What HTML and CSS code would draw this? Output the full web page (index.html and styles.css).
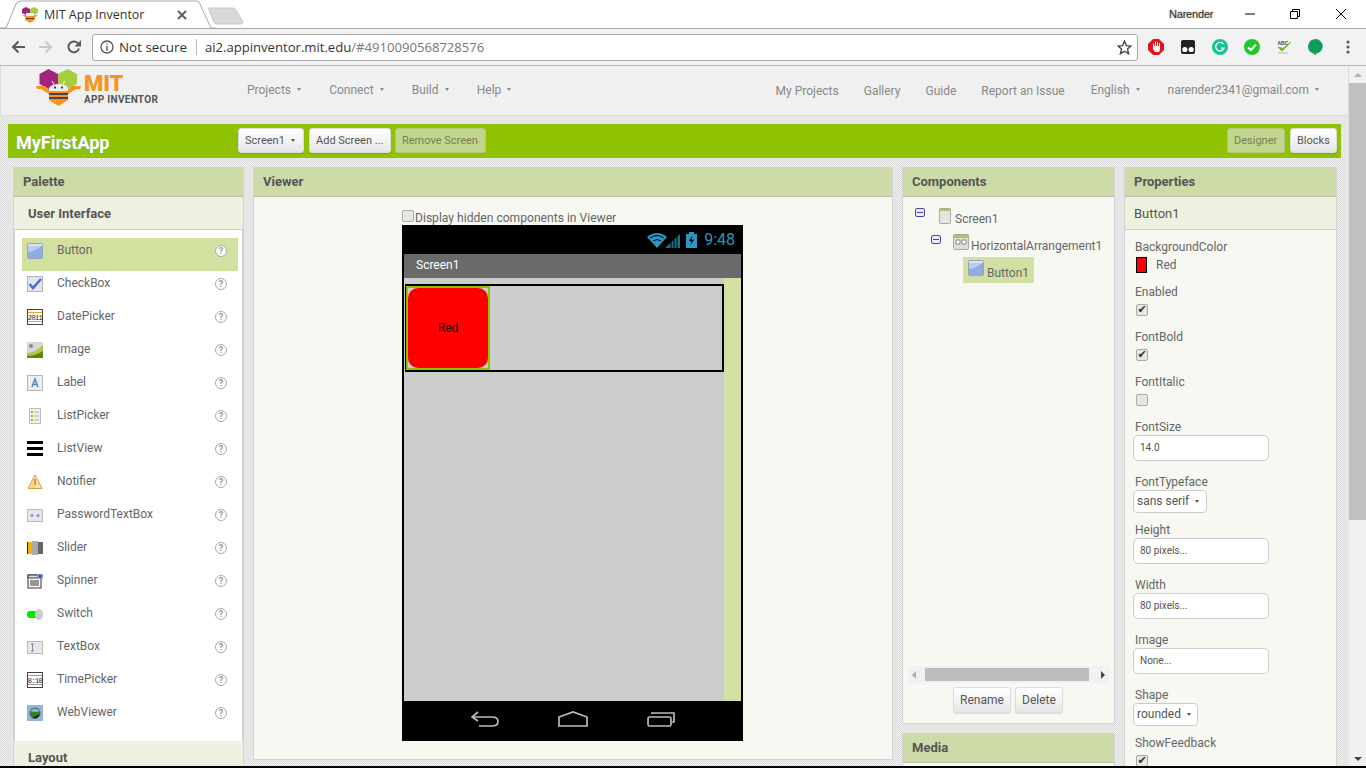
FILE: index.html
```html
<!DOCTYPE html>
<html lang="en">
<head>
<meta charset="utf-8">
<title>MIT App Inventor</title>
<link rel="stylesheet" href="styles.css">
</head>
<body>
<header class="chrome">
  <div class="tabstrip">
    <div class="tab">
      <svg class="tab-shape" width="216" height="29" viewBox="0 0 216 29"><path d="M0 28H6L16 4Q17 1 21 1H196Q199 1 200 4L211 28H216" fill="#fff" stroke="#a8a8a8"/></svg>
      <svg class="favicon" width="16" height="16" viewBox="0 0 16 16"><path d="M0 0H16V16H0Z" fill="#fff"/><path d="M4 0L8 2V6L4 8L0 6V2Z" fill="#a4237d"/><path d="M12 0L16 2V6L12 8L8 6V2Z" fill="#a5cf3f"/><path d="M0 8H16L13 10V13L8 16L3 13V10Z" fill="#f7931e"/><path d="M4 6H12V9H4Z" fill="#eee"/><path d="M4 11H12V12H4Z" fill="#444"/></svg>
      <span class="tab-title">MIT App Inventor</span>
      <svg class="tab-close" width="10" height="10" viewBox="0 0 10 10"><path d="M1 1L9 9M9 1L1 9" stroke="#5a5a5a" stroke-width="1.8"/></svg>
    </div>
    <svg class="newtab" width="36" height="18" viewBox="0 0 36 18"><path d="M1 1H25Q27 1 28 3L35 15Q35 17 33 17H9Q7 17 6 15L1 3Q0 1 1 1Z" fill="#d8d8d8" stroke="#c8c8c8"/></svg>
    <div class="winctl">
      <span class="user">Narender</span>
      <svg class="win-min" width="10" height="10" viewBox="0 0 10 10"><path d="M0 5H10" stroke="#000"/></svg>
      <svg class="win-max" width="10" height="10" viewBox="0 0 10 10"><path d="M.5 2.5H7.5V9.5H.5ZM2.5 2.5V.5H9.5V7.5H7.5" fill="none" stroke="#000"/></svg>
      <svg class="win-close" width="10" height="10" viewBox="0 0 10 10"><path d="M0 0L10 10M10 0L0 10" stroke="#000"/></svg>
    </div>
  </div>
  <div class="toolbar">
    <svg class="nav-ico" width="14" height="14" viewBox="0 0 14 14"><path d="M14 7H2M7.5 1.5L2 7L7.5 12.5" fill="none" stroke="#5a5a5a" stroke-width="2"/></svg>
    <svg class="nav-ico" width="14" height="14" viewBox="0 0 14 14"><path d="M0 7H12M6.5 1.5L12 7L6.5 12.5" fill="none" stroke="#c8c8c8" stroke-width="2"/></svg>
    <svg class="nav-ico" width="14" height="14" viewBox="0 0 14 14"><path d="M12 8.5A5.4 5.4 0 1 1 10.8 3.2" fill="none" stroke="#5a5a5a" stroke-width="2"/><path d="M14 0V6.5H7.5Z" fill="#5a5a5a"/></svg>
    <div class="omnibox">
      <svg class="info" width="14" height="14" viewBox="0 0 14 14"><circle cx="7" cy="7" r="6" fill="none" stroke="#555" stroke-width="1.3"/><path d="M6.3 3.2H7.7V4.6H6.3ZM6.3 6H7.7V10.8H6.3Z" fill="#555"/></svg>
      <span class="notsecure">Not secure</span>
      <span class="omni-sep"></span>
      <span class="url">ai2.appinventor.mit.edu<span class="url-rest">/#4910090568728576</span></span>
      <svg class="star" width="15" height="15" viewBox="0 0 15 15"><path d="M7.5 1.3L9.4 5.6L14 6L10.5 9.1L11.6 13.7L7.5 11.2L3.4 13.7L4.5 9.1L1 6L5.6 5.6Z" fill="none" stroke="#444" stroke-width="1.4"/></svg>
    </div>
    <div class="exts">
      <svg width="16" height="16" viewBox="0 0 16 16"><path d="M5 0H11L16 5V11L11 16H5L0 11V5Z" fill="#e6141a"/><path d="M5 5V10L7 13H11L12 11V4H11V7H10V3H9V7H8V2.7H7V7H6V4Z" fill="#fff"/></svg>
      <svg width="16" height="16" viewBox="0 0 16 16"><rect x="1" y="1" width="14" height="14" rx="2" fill="#222"/><circle cx="4.8" cy="10.5" r="2.6" fill="#fff"/><circle cx="11.2" cy="10.5" r="2.6" fill="#fff"/></svg>
      <svg width="16" height="16" viewBox="0 0 16 16"><circle cx="8" cy="8" r="8" fill="#15c39a"/><path d="M11.5 5.2A4.3 4.3 0 1 0 12 9.2H9" fill="none" stroke="#fff" stroke-width="1.3"/></svg>
      <svg width="16" height="16" viewBox="0 0 16 16"><circle cx="8" cy="8" r="8" fill="#1fc72d"/><path d="M4 8.5L7 11L12 5.5" fill="none" stroke="#fff" stroke-width="2"/></svg>
      <svg width="16" height="16" viewBox="0 0 16 16"><text x="1.500" y="5.500" class="abc">ABC</text><path d="M2 8L6 12L15 3L7 9.500Z" fill="#7cb518" stroke="#7cb518"/><path d="M2 14H12" stroke="#ccc" stroke-width="1.500"/></svg>
      <svg width="16" height="16" viewBox="0 0 16 16"><path d="M8 0A8 7.400 0 0 1 8 14.600V16.500L5 14.200A8 7.400 0 0 1 8 0Z" fill="#0f9d58"/></svg>
    </div>
    <svg class="kebab" width="4" height="14" viewBox="0 0 4 14"><circle cx="2" cy="2" r="1.600" fill="#5a5a5a"/><circle cx="2" cy="7" r="1.600" fill="#5a5a5a"/><circle cx="2" cy="12" r="1.600" fill="#5a5a5a"/></svg>
  </div>
</header>

<div class="page">
  <div class="main">
    <nav class="menubar">
      <div class="logo">
        <svg class="bee" width="46" height="38" viewBox="0 0 46 38">
          <path d="M3.500 5L12.500 0L22 5V15L12.500 20L3.500 15Z" fill="#a4237d"/>
          <path d="M22 5L31.500 0L41 5V15L31.500 20L22 15Z" fill="#a5cf3f"/>
          <path d="M0 17H9L15 22L13 25L5 20H1ZM45 17H36L30 22L32 25L40 20H44Z" fill="#f7931e"/>
          <path d="M13 20H32V31L22.500 37L13 31Z" fill="#f7931e"/>
          <path d="M13 19Q15 15 22.500 15Q30 15 32 19V22H13Z" fill="#eee"/>
          <path d="M18 15L16 12M27 15L29 12" stroke="#fff"/>
          <path d="M18 17.500H20V19.500H18ZM25 17.500H27V19.500H25Z" fill="#444"/>
          <path d="M13 24H32V26H13ZM13 28H32V30H13Z" fill="#444"/>
        </svg>
        <div class="logo-text">
          <span class="logo-mit">MIT</span>
          <span class="logo-app">APP INVENTOR</span>
        </div>
      </div>
      <ul class="menu">
        <li>Projects<i class="caret"></i></li>
        <li>Connect<i class="caret"></i></li>
        <li>Build<i class="caret"></i></li>
        <li>Help<i class="caret"></i></li>
      </ul>
      <ul class="menu menu-right">
        <li class="low">My Projects</li>
        <li class="low">Gallery</li>
        <li class="low">Guide</li>
        <li class="low">Report an Issue</li>
        <li class="menu-lang">English<i class="caret"></i></li>
        <li class="menu-user">narender2341@gmail.com<i class="caret"></i></li>
      </ul>
    </nav>

    <div class="projectbar">
      <span class="project-name">MyFirstApp</span>
      <button class="btn btn-screen">Screen1<i class="caret caret-dark"></i></button>
      <button class="btn btn-add">Add Screen ...</button>
      <button class="btn btn-off btn-remove">Remove Screen</button>
      <button class="btn btn-off btn-designer">Designer</button>
      <button class="btn btn-blocks">Blocks</button>
    </div>

    <div class="panels">
      <section class="panel palette">
        <h2 class="panel-head">Palette</h2>
        <h3 class="sub-head sub-strong">User Interface</h3>
        <div class="pal-list">
          <div class="pal-row selected"><svg class="pal-ico" viewBox="0 0 16 16"><rect x=".5" y=".5" width="15" height="15" rx="1" fill="#b9cdee" stroke="#9aa4b8"/><path d="M1 15V9Q8 9 15 2V15Z" fill="#8fade0"/><path d="M1 1H15V3H1Z" fill="#dbe4f5"/></svg><span class="pal-name">Button</span><span class="help">?</span></div>
          <div class="pal-row"><svg class="pal-ico" viewBox="0 0 16 16"><rect x=".5" y=".5" width="15" height="15" fill="#e4e6ea" stroke="#b5b5b5"/><path d="M2.500 8L6 12L14 3" fill="none" stroke="#4472c4" stroke-width="2.500"/></svg><span class="pal-name">CheckBox</span><span class="help">?</span></div>
          <div class="pal-row"><svg class="pal-ico" viewBox="0 0 16 16"><rect x=".5" y=".5" width="15" height="15" fill="#fff" stroke="#444"/><path d="M1 3.500H15M1 12.500H15" stroke="#f0a030"/><text x="8" y="10.500" class="ico-digits">2011</text></svg><span class="pal-name">DatePicker</span><span class="help">?</span></div>
          <div class="pal-row"><svg class="pal-ico" viewBox="0 0 16 16"><rect width="16" height="16" fill="#d8d8d8"/><path d="M0 11Q8 11 16 3V16H0Z" fill="#a8c850"/><path d="M0 14Q8 14 16 9V16H0Z" fill="#5f8a00"/><circle cx="4" cy="4" r="2" fill="#888"/></svg><span class="pal-name">Image</span><span class="help">?</span></div>
          <div class="pal-row"><svg class="pal-ico" viewBox="0 0 16 16"><rect x=".5" y=".5" width="15" height="15" fill="#eee" stroke="#b5b5b5"/><path d="M5 12L8 4L11 12M6 9.500H10" fill="none" stroke="#5b84c8" stroke-width="1.500"/></svg><span class="pal-name">Label</span><span class="help">?</span></div>
          <div class="pal-row"><svg class="pal-ico" viewBox="0 0 16 16"><rect x="2.500" y=".5" width="11" height="15" fill="#f0f0f0" stroke="#bbb"/><path d="M4 4H6M4 8H6M4 12H6" stroke="#8fc202" stroke-width="2"/><path d="M7 4H12M7 8H12M7 12H12" stroke="#aaa"/></svg><span class="pal-name">ListPicker</span><span class="help">?</span></div>
          <div class="pal-row"><svg class="pal-ico" viewBox="0 0 16 16"><path d="M0 1.500H16M0 7.500H16M0 13.500H16" stroke="#000" stroke-width="3"/></svg><span class="pal-name">ListView</span><span class="help">?</span></div>
          <div class="pal-row"><svg class="pal-ico" viewBox="0 0 16 16"><path d="M8 1L15 14.500H1Z" fill="#fbe0a8" stroke="#c9a040"/><path d="M8 5V11" stroke="#a57c20" stroke-width="1.500"/><path d="M1 14.500L8 1V14.500Z" fill="#f5c56a" opacity=".5"/></svg><span class="pal-name">Notifier</span><span class="help">?</span></div>
          <div class="pal-row"><svg class="pal-ico" viewBox="0 0 16 16"><rect x=".5" y="2.500" width="15" height="12" fill="#e8e8e8" stroke="#bbb"/><circle cx="5" cy="8.500" r="1.500" fill="#7a9ad0"/><circle cx="11" cy="8.500" r="1.500" fill="#7a9ad0"/></svg><span class="pal-name">PasswordTextBox</span><span class="help">?</span></div>
          <div class="pal-row"><svg class="pal-ico" viewBox="0 0 16 16"><rect y="2" width="5" height="12" fill="#f2b200"/><rect x="5" y="2" width="11" height="12" fill="#666"/><rect x="0" y="2" width="1" height="12" fill="#222"/><rect x="5" y="1" width="6" height="14" fill="#aaa"/></svg><span class="pal-name">Slider</span><span class="help">?</span></div>
          <div class="pal-row"><svg class="pal-ico" viewBox="0 0 16 16"><rect x="1" y="2" width="13" height="13" fill="#fff" stroke="#333"/><path d="M1 2H15V5H1Z" fill="#ddd" stroke="#333"/><rect x="10" y="1" width="6" height="4.500" fill="#7a9ad0"/><path d="M11.500 2.500H14.500L13 4.500Z" fill="#111"/><path d="M3 8H12M3 10H12M3 12H12" stroke="#333"/></svg><span class="pal-name">Spinner</span><span class="help">?</span></div>
          <div class="pal-row"><svg class="pal-ico" viewBox="0 0 16 16"><rect y="5" width="12" height="7" rx="3" fill="#00e800"/><ellipse cx="12" cy="8.500" rx="4" ry="5.500" fill="#ccc"/></svg><span class="pal-name">Switch</span><span class="help">?</span></div>
          <div class="pal-row"><svg class="pal-ico" viewBox="0 0 16 16"><rect x=".5" y="2.500" width="15" height="12" fill="#e8e8e8" stroke="#bbb"/><path d="M4 5H7M4 12H7M5.500 5V12" stroke="#7a8aa8"/></svg><span class="pal-name">TextBox</span><span class="help">?</span></div>
          <div class="pal-row"><svg class="pal-ico" viewBox="0 0 16 16"><rect x=".5" y=".5" width="15" height="15" fill="#fff" stroke="#444"/><path d="M1 3.500H15M1 12.500H15" stroke="#999"/><text x="8" y="10.500" class="ico-digits">8:10</text></svg><span class="pal-name">TimePicker</span><span class="help">?</span></div>
          <div class="pal-row"><svg class="pal-ico" viewBox="0 0 16 16"><rect width="16" height="16" fill="#8fb5e0"/><circle cx="8" cy="8" r="5.500" fill="#3c7a28"/><path d="M3 6Q8 1 13 6Q9 8 3 6Z" fill="#7fb8e8"/><path d="M5 13Q9 11 13 9Q11 13.500 8 13.500Z" fill="#142a10"/></svg><span class="pal-name">WebViewer</span><span class="help">?</span></div>
        </div>
        <h3 class="sub-head sub-strong">Layout</h3>
      </section>

      <section class="panel viewer">
        <h2 class="panel-head">Viewer</h2>
        <div class="viewer-body">
          <label class="hidden-toggle"><span class="check"></span>Display hidden components in Viewer</label>
          <div class="phone">
            <div class="statusbar">
              <svg width="34" height="16" viewBox="0 0 34 16"><path d="M0 5Q10 -3 20 5L10 16Z" fill="#2f94bf"/><path d="M3 6Q10 1 17 6" fill="none" stroke="#000"/><path d="M6 9Q10 6 14 9" fill="none" stroke="#000"/><path d="M18 16H33V2Z" fill="#1d6c8e"/><path d="M24 16V10M27 16V7M30 16V4" stroke="#000"/></svg>
              <svg class="batt" width="11" height="16" viewBox="0 0 11 16"><path d="M3 0H8V2H11V16H0V2H3Z" fill="#2f94bf"/><path d="M6.500 3.500L3 9H5.500L4.500 13L8 7.500H5.500Z" fill="#000"/></svg>
              <span class="clock">9:48</span>
            </div>
            <div class="titlebar">Screen1</div>
            <div class="screen">
              <div class="form">
                <div class="arrangement">
                  <div class="sel-wrap"><div class="red-btn">Red</div></div>
                </div>
              </div>
              <div class="screen-strip"></div>
            </div>
            <div class="navbar">
              <svg width="28" height="16" viewBox="0 0 28 16"><path d="M7 1L1 6L7 10M1 6H21Q27 6 27 10.500Q27 15 21 15H8" fill="none" stroke="#bbb" stroke-width="1.700"/></svg>
              <svg width="30" height="16" viewBox="0 0 30 16"><path d="M1 6L15 1L29 6V15H1Z" fill="none" stroke="#bbb" stroke-width="1.700"/></svg>
              <svg width="28" height="16" viewBox="0 0 28 16"><rect x="1" y="6" width="23" height="9" rx="1.500" fill="none" stroke="#bbb" stroke-width="1.700"/><path d="M5 3V2H27V11H25" fill="none" stroke="#bbb" stroke-width="1.700"/></svg>
            </div>
          </div>
        </div>
      </section>

      <div class="col-components">
        <section class="panel components">
          <h2 class="panel-head">Components</h2>
          <div class="comp-body">
            <div class="tree">
              <div class="node node-0"><span class="minus"></span><svg class="tree-ico" width="12" height="16" viewBox="0 0 12 16"><rect x=".5" y=".5" width="11" height="15" rx="1" fill="#e4e4e4" stroke="#aaa"/><path d="M1 1H11V3H1Z" fill="#a5cf3f"/></svg><span>Screen1</span></div>
              <div class="node node-1"><span class="minus"></span><svg class="tree-ico" width="16" height="16" viewBox="0 0 16 16"><rect x=".5" y=".5" width="15" height="15" rx="1" fill="#ddd" stroke="#aaa"/><path d="M1 1H15V4H1Z" fill="#a5cf3f"/><path d="M3 6H7V10H3ZM9 6H13V10H9Z" fill="#fff" stroke="#888"/></svg><span>HorizontalArrangement1</span></div>
              <div class="node node-2"><div class="node-sel"><svg class="tree-ico" width="16" height="16" viewBox="0 0 16 16"><rect x=".5" y=".5" width="15" height="15" rx="1" fill="#b9cdee" stroke="#9aa4b8"/><path d="M1 15V9Q8 9 15 2V15Z" fill="#8fade0"/><path d="M1 1H15V3H1Z" fill="#dbe4f5"/></svg><span>Button1</span></div></div>
            </div>
            <div class="hscroll">
              <i class="arr arr-left"></i>
              <span class="hthumb"></span>
              <i class="arr arr-right"></i>
            </div>
            <div class="comp-actions">
              <button class="btn btn-action btn-rename">Rename</button>
              <button class="btn btn-action btn-delete">Delete</button>
            </div>
          </div>
        </section>
        <section class="panel media">
          <h2 class="panel-head">Media</h2>
        </section>
      </div>

      <section class="panel properties">
        <h2 class="panel-head">Properties</h2>
        <h3 class="sub-head">Button1</h3>
        <div class="prop-list">
          <div class="prop"><div class="prop-label">BackgroundColor</div><div class="color-row"><span class="swatch"></span>Red</div></div>
          <div class="prop"><div class="prop-label">Enabled</div><span class="check checked">✔</span></div>
          <div class="prop"><div class="prop-label">FontBold</div><span class="check checked">✔</span></div>
          <div class="prop"><div class="prop-label">FontItalic</div><span class="check"></span></div>
          <div class="prop prop-tall"><div class="prop-label">FontSize</div><div class="field">14.0</div></div>
          <div class="prop prop-sel"><div class="prop-label">FontTypeface</div><div class="select select-face">sans serif<i class="caret caret-dark"></i></div></div>
          <div class="prop prop-tall"><div class="prop-label">Height</div><div class="field">80 pixels...</div></div>
          <div class="prop prop-tall"><div class="prop-label">Width</div><div class="field">80 pixels...</div></div>
          <div class="prop prop-tall"><div class="prop-label">Image</div><div class="field">None...</div></div>
          <div class="prop prop-sel"><div class="prop-label">Shape</div><div class="select select-shape">rounded<i class="caret caret-dark"></i></div></div>
          <div class="prop"><div class="prop-label">ShowFeedback</div><span class="check checked">✔</span></div>
        </div>
      </section>
    </div>
  </div>

  <div class="vscroll">
    <i class="arr arr-up"></i>
    <span class="vthumb"></span>
    <i class="arr arr-down"></i>
  </div>
</div>
<div class="taskbar"></div>
</body>
</html>
```
FILE: styles.css
```css
* { box-sizing: border-box; }
html, body { margin: 0; height: 768px; overflow: hidden; }
body { display: flex; flex-direction: column; font-family: Roboto, "Liberation Sans", sans-serif; color: #5f5f5f; background: #fff; }
h2, h3, ul { margin: 0; padding: 0; list-style: none; }
svg { display: block; flex: none; }
i { display: block; }

/* browser chrome */
.chrome { flex: none; height: 66px; font-family: "Open Sans", "Noto Sans", sans-serif; }
.tabstrip { height: 29px; display: flex; background: #fff; border-bottom: 1px solid #a8a8a8; position: relative; }
.tab { position: relative; z-index: 1; width: 216px; height: 29px; display: flex; align-items: center; flex: none; }
.tab-shape { position: absolute; left: 0; top: 0; }
.favicon, .tab-title, .tab-close { position: relative; }
.favicon { margin: 0 0 0 22px; }
.tab-title { margin-left: 6px; font-size: 12.500px; color: #333; width: 132px; white-space: nowrap; }
.tab-close { margin-left: 1px; }
.newtab { margin: 7px 0 0 -8px; }
.winctl { margin-left: auto; display: flex; align-items: center; height: 28px; padding-right: 20px; }
.user { font-family: "Liberation Sans", sans-serif; font-size: 11px; letter-spacing: -.2px; color: #333; margin-right: 30px; text-shadow: 0 0 2px #999; width: 46px; white-space: nowrap; }
.win-min { margin-right: 35px; }
.win-max { margin-right: 36px; }
.toolbar { height: 37px; background: #f2f2f2; border-bottom: 1px solid #b8b8b8; display: flex; align-items: center; padding: 0 0 0 11px; }
.nav-ico { margin-right: 14px; }
.nav-ico + .omnibox { margin-left: -3px; }
.omnibox { width: 1046px; height: 27px; background: #fff; border: 1px solid #aaa; border-radius: 3px; display: flex; align-items: center; padding: 0 5px 0 7px; font-size: 14px; color: #333; flex: none; }
.notsecure { margin-left: 5px; font-size: 13.400px; white-space: nowrap; }
.omni-sep { width: 1px; height: 16px; background: #bbb; margin: 0 8px 0 9px; }
.url { font-size: 13.100px; white-space: nowrap; }
.url-rest { color: #777; }
.star { margin-left: auto; }
.exts { display: flex; gap: 16px; margin-left: 10px; }
.abc { font: bold 5px "Liberation Sans", sans-serif; fill: #444; }
.kebab { margin-left: 22px; }

/* page */
.page { flex: 1; min-height: 0; display: flex; }
.main { flex: 1; min-width: 0; overflow: hidden; background-color: #e6e6e6; background-image: conic-gradient(#f0f0f0 25%, #dcdcdc 0 50%, #f0f0f0 0 75%, #dcdcdc 0); background-size: 2px 2px; }
.menubar { height: 50px; background: #f0f0f0; border: 1px solid #ddd; border-top: 0; display: flex; align-items: center; font-size: 12px; padding-bottom: 2px; }
.logo { width: 247px; height: 48px; padding-left: 35px; display: flex; flex: none; align-items: flex-start; }
.bee { margin-top: 3px; }
.logo-text { margin: 7px 0 0 2px; display: flex; flex-direction: column; }
.logo-mit { font-size: 22px; line-height: 21px; font-weight: 900; color: #f7931e; }
.logo-app { font-size: 10px; line-height: 11px; font-weight: 700; color: #555; letter-spacing: .3px; white-space: nowrap; }
.menu { display: flex; gap: 28.200px; color: #888; margin-left: -1px; }
.menu li { display: flex; align-items: center; white-space: nowrap; }
.menu .low { position: relative; top: 1px; }
.menu-right { margin-left: auto; gap: 25px; padding-right: 29px; }
.menu-lang { margin-left: 1px; }
.menu-user { margin-left: 3px; }
.caret { width: 0; height: 0; border: 2.500px solid transparent; border-top: 3px solid #888; border-bottom: 0; margin-left: 6px; }
.caret-dark { border-top-color: #555; }

.projectbar { margin: 8px 8px 0 8px; height: 34px; background: #8fc202; display: flex; align-items: center; padding: 0 4px 2px 8px; }
.project-name { font-size: 18px; font-weight: 700; color: #fff; width: 222px; margin-top: 4px; text-shadow: 0 1px 1px #7a9; }
.btn { font: 11px Roboto, sans-serif; color: #555; height: 25px; padding: 0 6px; border: 1px solid #ddd; border-radius: 3px; background: linear-gradient(#fff, #e6e6e6); display: flex; align-items: center; white-space: nowrap; box-shadow: 0 1px 1px rgba(0,0,0,.12); }
.btn-screen { width: 66px; }
.btn-add { width: 82px; margin-left: 5px; }
.btn-off { background: #c2d58e; border-color: #b5c97e; color: #727f55; box-shadow: none; }
.btn-remove { width: 91px; margin-left: 4px; }
.btn-designer { width: 58px; margin-left: auto; }
.btn-blocks { width: 47px; margin-left: 5px; }

.panels { display: flex; align-items: flex-start; gap: 9px; padding: 9px 0 0 13px; }
.panel { background: #f7f8f2; border: 1px solid #d4d4d4; border-top: 0; }
.panel-head { height: 30px; line-height: 29px; padding-left: 9px; font-size: 13px; font-weight: 700; color: #555; background: #cddba8; border-bottom: 1px solid #b9bfa8; }
.sub-head { height: 33px; line-height: 33px; padding-left: 9px; font-size: 13px; font-weight: 400; color: #555; background: #eef1e0; border-bottom: 1px solid #ccc; }
.sub-strong { font-weight: 700; padding-left: 14px; }

.palette { width: 231px; flex: none; background: #fff; height: 600px; }
.pal-list { height: 511px; padding: 8px 4px 0 7px; background: #fff; border-left: 1px solid #ccc; border-right: 1px solid #ccc; }
.pal-row { width: 216px; height: 33px; display: flex; align-items: flex-start; padding: 5px 11px 0 5px; font-size: 12px; color: #666; }
.pal-row.selected { background: #d2e0a0; }
.pal-ico { width: 16px; height: 16px; margin-right: 14px; }
.ico-digits { font: 7px "Liberation Mono", monospace; fill: #222; text-anchor: middle; letter-spacing: -.6px; }
.pal-name { line-height: 14px; flex: 1; }
.help { width: 12px; height: 12px; margin-top: 2px; border: 1px solid #aaa; border-radius: 50%; font-size: 9px; font-weight: 700; line-height: 10px; text-align: center; color: #999; background: #fff; }

.viewer { width: 640px; flex: none; }
.viewer-body { height: 562px; padding: 13px 0 0 148px; }
.hidden-toggle { display: flex; height: 15px; font-size: 12.100px; line-height: 17px; color: #666; white-space: nowrap; align-items: flex-start; }
.hidden-toggle .check { margin: 0 1px 0 0; }
.check { display: block; width: 12px; height: 12px; background: #e6e6e6; border: 1px solid #aaa; border-radius: 2px; font-size: 11px; line-height: 10px; text-align: center; color: #333; font-family: "DejaVu Sans", sans-serif; }
.phone { width: 341px; height: 516px; background: #000; padding: 0 2px; display: flex; flex-direction: column; }
.statusbar { height: 29px; display: flex; align-items: center; justify-content: flex-end; padding: 0 6px 0 0; flex: none; }
.batt { margin-left: 5px; }
.clock { color: #2f94bf; font-size: 16px; margin-left: 7px; }
.titlebar { height: 24px; line-height: 22px; padding-left: 12px; background: #6a6a6a; color: #fff; font-size: 12px; flex: none; }
.screen { flex: 1; display: flex; background: #ccc; min-height: 0; }
.form { flex: 1; padding: 6px 0 0 1px; }
.arrangement { height: 88px; border: 2px solid #000; background: #ccc; }
.sel-wrap { width: 84px; height: 84px; margin-left: -1px; border: 2px solid #8fc202; }
.red-btn { width: 80px; height: 80px; background: #f00; border-radius: 10px; display: flex; align-items: center; justify-content: center; color: #111; font-size: 12px; }
.screen-strip { width: 17px; background: #d2e0a4; }
.navbar { height: 40px; display: flex; align-items: center; justify-content: space-between; padding: 0 66px 4px 67px; flex: none; }

.col-components { width: 213px; flex: none; display: flex; flex-direction: column; gap: 9px; }
.comp-body { height: 526px; display: flex; flex-direction: column; }
.tree { flex: 1; padding-top: 2px; font-size: 12px; color: #666; }
.node { display: flex; align-items: flex-end; height: 27px; }
.node-0 { padding-left: 12px; }
.node-1 { padding-left: 28px; }
.minus { width: 10px; height: 9px; border: 1px solid #44a; border-radius: 2px; margin: 0 14px 9px 0; background: linear-gradient(#44a, #44a) center / 6px 1px no-repeat #eef; }
.node-1 .minus { margin-right: 12px; }
.tree-ico { margin-right: 4px; margin-bottom: 2px; }
.node-1 .tree-ico { margin-right: 2px; margin-bottom: 3px; }
.node-2 { height: 26px; align-items: flex-start; padding-left: 60px; margin-top: 4px; }
.node-sel { height: 26px; width: 71px; background: #d2e0a4; padding: 3px 0 0 5px; display: flex; align-items: flex-start; }
.node-sel span { margin-top: 6px; }
.node-sel .tree-ico { margin: 0 3px 0 0; }
.hscroll { height: 17px; margin: 0 5px; background: #f1f1f1; display: flex; align-items: center; padding: 0 4px; flex: none; }
.hthumb { width: 164px; height: 13px; background: #bdbdbd; margin: 0 8px 0 9px; }
.arr { width: 0; height: 0; border: 4px solid transparent; }
.arr-left { border-right-color: #b0b0b0; border-left: 0; }
.arr-right { border-left-color: #444; border-right: 0; margin-left: auto; }
.comp-actions { height: 40px; flex: none; display: flex; gap: 4px; padding: 4px 0 0 50px; }
.btn-action { height: 26px; font-size: 12px; padding: 0 6px; }
.btn-rename { width: 58px; }
.btn-delete { width: 48px; }
.media { height: 40px; }
.properties { width: 213px; flex: none; height: 610px; }
.prop-list { padding-top: 10px; }
.prop { height: 45px; padding-left: 10px; font-size: 12px; color: #666; }
.prop-tall { height: 55px; padding-left: 8px; }
.prop-sel { height: 48px; padding-left: 8px; }
.prop-tall .prop-label, .prop-sel .prop-label { margin-left: 2px; }
.prop-label { line-height: 15px; height: 15px; margin-bottom: 2px; }
.color-row { display: flex; align-items: center; height: 16px; }
.swatch { width: 11px; height: 16px; background: #f00; border: 1px solid #000; margin-right: 9px; margin-left: 1px; }
.prop .check { margin: 4px 0 0 1px; }
.field { width: 136px; height: 26px; background: #fff; border: 1px solid #ccc; border-radius: 5px; font-size: 10px; line-height: 24px; padding-left: 6px; color: #555; margin-top: -2px; }
.select { height: 23px; background: #fff; border: 1px solid #ccc; border-radius: 4px; font-size: 12px; line-height: 21px; padding-left: 3px; display: flex; align-items: center; color: #555; margin-top: -2px; }
.select-face { width: 74px; }
.select-shape { width: 65px; }
.select .caret { margin-left: 6px; }

.vscroll { width: 17px; flex: none; background: #f1f1f1; display: flex; flex-direction: column; align-items: center; padding-top: 7px; }
.arr-up { border-bottom-color: #b0b0b0; border-top: 0; }
.arr-down { border-top-color: #444; border-bottom: 0; margin-top: auto; margin-bottom: 5px; }
.vthumb { width: 17px; height: 437px; background: #c0c0c0; margin-top: 6px; }
.taskbar { flex: none; height: 2px; background: #000; }
```
